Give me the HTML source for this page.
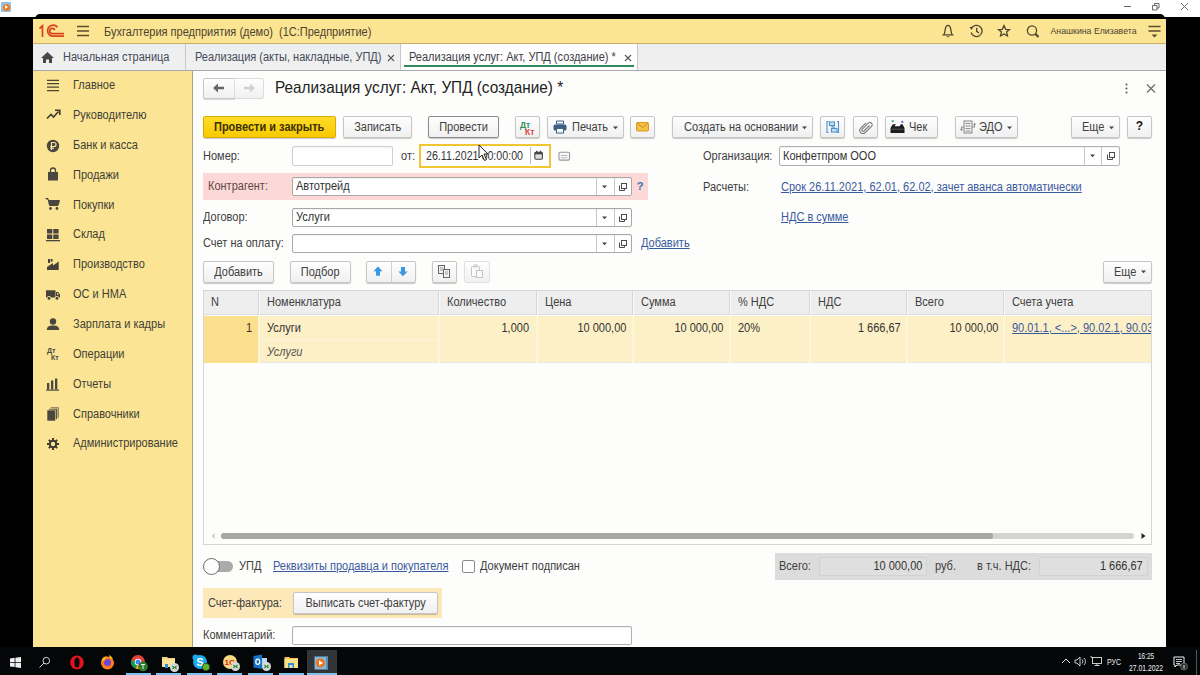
<!DOCTYPE html>
<html><head><meta charset="utf-8">
<style>
*{box-sizing:border-box;margin:0;padding:0}
html,body{width:1200px;height:675px;overflow:hidden;background:#000;font-family:"Liberation Sans",sans-serif;font-size:11px;color:#404040}
div,span,svg{position:absolute}
.t{white-space:nowrap;line-height:1}
.btn{height:21px;background:linear-gradient(#fefefe,#f0f0f0);border:1px solid #c6c6c6;border-radius:2px;box-shadow:0 1px 1px rgba(0,0,0,.2);color:#404040;text-align:center;line-height:19px;white-space:nowrap}
.fld{background:#fff;border:1px solid #c6c6c6;border-radius:2px;box-shadow:inset 0 1px 1px rgba(0,0,0,.05)}
.lnk{color:#3a5a9e;text-decoration:underline;white-space:nowrap;line-height:1}
.si{left:73px;color:#403e34;white-space:nowrap;line-height:1;font-size:12px;transform:scaleX(.917);transform-origin:0 0}
.s{font-size:12px;transform:scaleX(.917);transform-origin:0 0}
.sr{font-size:12px;transform:scaleX(.917);transform-origin:100% 0}
i.bt{position:relative;top:.8px;display:inline-block;font-style:normal;font-size:12px;transform:scaleX(.917)}
i.bl{transform-origin:0 50%}
.ic{left:47px;fill:#4a4a44}
.th{top:290px;height:25px;background:#eeeeee;border-right:1px solid #fff;line-height:25px;padding-left:7px;color:#404040;white-space:nowrap}
.dd{width:1px;background:#d8d8d8}
</style></head><body>
<!-- top white bar -->
<div style="left:0;top:0;width:1200px;height:17px;background:#fff"></div>
<div style="left:1px;top:2px;width:10px;height:10px;background:#8fc3ea;border-radius:1px"></div>
<div style="left:2.5px;top:3.5px;width:7px;height:7px;background:#f47a12;border-radius:50%"></div>
<svg style="left:0;top:0" width="12" height="14"><path d="M5 5 L8 7 L5 9 Z" fill="#fff"/></svg>
<svg style="left:1120px;top:0" width="80" height="14" fill="none" stroke="#666" stroke-width="1">
 <path d="M4 6.5 H11"/>
 <path d="M32.5 5.5 h4.5 v4.5 h-4.5 z M34.5 5.5 v-2 h4.5 v4.5 h-2"/>
 <path d="M61 3 L68 10 M68 3 L61 10"/>
</svg>
<div style="left:35px;top:14px;width:1130px;height:8px;background:#000;border-radius:5px 5px 0 0"></div>
<!-- window -->
<div style="left:33px;top:19px;width:1133px;height:628px;background:#fdfdfc"></div>
<!-- header -->
<div style="left:33px;top:19px;width:1133px;height:25px;background:#fce592;border-bottom:1px solid #c9b06a"></div>
<svg style="left:38px;top:24px" width="28" height="14" fill="none" stroke="#d8431c" stroke-width="1.7">
 <path d="M1.5 4.5 L4.5 1.8 V13"/>
 <path d="M19.5 3.2 A5.6 5.6 0 1 0 14 12.2 H26"/>
 <path d="M16.8 6.2 A2.6 2.6 0 1 0 14 9.6 H26"/>
</svg>
<svg style="left:76px;top:25px" width="14" height="12" stroke="#5b4d2e" stroke-width="1.3"><path d="M1 1.5 H13 M1 6 H13 M1 10.5 H13"/></svg>
<span class="t s" style="left:103.8px;top:25.7px;color:#4a4330">Бухгалтерия предприятия (демо)&nbsp; (1С:Предприятие)</span>
<svg style="left:940px;top:23px" width="110" height="16" fill="none" stroke="#4f4630" stroke-width="1.3">
 <path d="M2.5 11.8 H13.5 M3.8 11.8 C5 10.3 5 6.5 5.5 5 C6 3 7 2.3 8 2.3 C9 2.3 10 3 10.5 5 C11 6.5 11 10.3 12.2 11.8" /><path d="M6.2 13.2 H9.8 L8 14.6 Z" fill="#4f4630" stroke="none"/>
 <path d="M31.6 5.2 A5.6 5.6 0 1 1 31.1 9.5 M36.7 4.8 V8.4 L39 10" /><path d="M29.5 4 L33 3.8 L31.6 7 Z" fill="#4f4630" stroke="none"/>
 <path d="M64 2.5 L65.7 6.3 L69.5 6.6 L66.6 9.1 L67.5 13 L64 10.9 L60.5 13 L61.4 9.1 L58.5 6.6 L62.3 6.3 Z" />
 <circle cx="92" cy="7.5" r="4.6"/><path d="M95.2 10.7 L98.5 14" stroke-width="2.2"/>
</svg>
<span class="t" style="left:1050.5px;top:26.9px;font-size:8.76px;color:#4a4330">Анашкина Елизавета</span>
<svg style="left:1147px;top:24px" width="16" height="16" stroke="#5b4d2e" stroke-width="1.3"><path d="M1.5 2.5 H13.5 M1.5 7 H13.5"/><path d="M4.5 10.5 H10.5 L7.5 13.5 Z" fill="#5b4d2e" stroke="none"/></svg>
<!-- tabs -->
<div style="left:33px;top:44px;width:1133px;height:27px;background:linear-gradient(#edeeef,#f0f0f0);border-bottom:1px solid #a9a9a9"></div>
<div style="left:185px;top:44px;width:1px;height:26px;background:#c8c8c8"></div>
<div style="left:400px;top:44px;width:1px;height:26px;background:#c8c8c8"></div>
<div style="left:401px;top:44px;width:236px;height:26px;background:#fdfdfd"></div>
<div style="left:637px;top:44px;width:1px;height:26px;background:#c8c8c8"></div>
<div style="left:404px;top:65px;width:230px;height:2px;background:#2f8a5a"></div>
<svg style="left:41px;top:51px" width="14" height="13" fill="#484848"><path d="M6.5 1 L13 7 H11 V12 H8 V8.5 H5 V12 H2 V7 H0 Z"/></svg>
<span class="t s" style="left:63.4px;top:50.8px;color:#454a58">Начальная страница</span>
<span class="t s" style="left:194.7px;top:51.2px;color:#454a58">Реализация (акты, накладные, УПД)</span>
<svg style="left:387px;top:54px" width="8" height="8" stroke="#555" stroke-width="1.1"><path d="M1 1 L7 7 M7 1 L1 7"/></svg>
<span class="t s" style="left:409px;top:51.2px;color:#404048">Реализация услуг: Акт, УПД (создание) *</span>
<svg style="left:624px;top:54px" width="8" height="8" stroke="#555" stroke-width="1.1"><path d="M1 1 L7 7 M7 1 L1 7"/></svg>
<!-- sidebar -->
<div style="left:33px;top:71px;width:160px;height:576px;background:#fbe595;border-right:1px solid #a8a27a"></div>
<span class="si" style="top:79.0px">Главное</span>
<span class="si" style="top:108.8px">Руководителю</span>
<span class="si" style="top:138.7px">Банк и касса</span>
<span class="si" style="top:168.6px">Продажи</span>
<span class="si" style="top:198.5px">Покупки</span>
<span class="si" style="top:228.3px">Склад</span>
<span class="si" style="top:258.2px">Производство</span>
<span class="si" style="top:288.1px">ОС и НМА</span>
<span class="si" style="top:317.9px">Зарплата и кадры</span>
<span class="si" style="top:347.8px">Операции</span>
<span class="si" style="top:377.7px">Отчеты</span>
<span class="si" style="top:407.5px">Справочники</span>
<span class="si" style="top:437.4px">Администрирование</span>

<!-- sidebar icons -->
<svg style="left:46px;top:78px" width="14" height="14" stroke="#4a4535" stroke-width="1.3"><path d="M1 2.3 H13 M1 5.7 H13 M1 9.1 H13 M1 12.6 H13"/></svg>
<svg style="left:46px;top:109px" width="15" height="11" fill="none" stroke="#403c30" stroke-width="1.6"><path d="M1 9.5 L5 5.5 L7.5 8 L12.5 2.5"/><path d="M9 1.2 H13.8 V6" /></svg>
<svg style="left:46px;top:139px" width="14" height="14"><circle cx="7" cy="7" r="6.2" fill="#4a4640"/><path d="M5.5 11 V3.5 H8 A2 2 0 0 1 8 7.5 H4.2 M4.2 9.2 H8" fill="none" stroke="#fbe595" stroke-width="1.2"/></svg>
<svg style="left:47px;top:167px" width="12" height="15"><path d="M3.5 5 V3.5 A2.5 2.5 0 0 1 8.5 3.5 V5" fill="none" stroke="#4a4640" stroke-width="1.3"/><path d="M1 5 H11 V13.5 H1 Z" fill="#4a4640"/></svg>
<svg style="left:45px;top:197px" width="16" height="14" fill="#4a4640"><path d="M0.5 1.5 H3 L4.5 8.5 H13 L14.5 3.5 H3.5" fill="#4a4640" stroke="#4a4640" stroke-width="1"/><circle cx="5.5" cy="11.5" r="1.4"/><circle cx="12" cy="11.5" r="1.4"/></svg>
<svg style="left:46px;top:228px" width="14" height="14" fill="#4a4640"><rect x="1" y="1" width="5.3" height="4.5"/><rect x="7.3" y="1" width="5.3" height="4.5"/><rect x="1" y="6.5" width="5.3" height="4.5"/><rect x="7.3" y="6.5" width="5.3" height="4.5"/><rect x="0" y="12" width="14" height="1.3"/></svg>
<svg style="left:46px;top:257px" width="14" height="14" fill="#45423a"><path d="M1 13 V10 L7 6 V8.5 L12.7 4.5 V13 Z"/><rect x="2" y="2" width="2" height="4"/><rect x="4.6" y="2" width="2" height="2.6"/></svg>
<svg style="left:45px;top:288px" width="16" height="13" fill="#45423a"><rect x="1" y="2.3" width="9.5" height="7.2"/><path d="M11 4 H13.3 L15 6.5 V9.5 H11 Z"/><path d="M12 5 H13 L14 6.5 H12 Z" fill="#fbe595"/><circle cx="4" cy="10.3" r="1.9" stroke="#fbe595" stroke-width="0.9"/><circle cx="12" cy="10.3" r="1.9" stroke="#fbe595" stroke-width="0.9"/></svg>
<svg style="left:46px;top:317px" width="14" height="14" fill="#4a4640"><circle cx="7" cy="4.5" r="3.2"/><path d="M0.8 13 C1 9 4 8.5 7 8.5 C10 8.5 13 9 13.2 13 Z"/></svg>
<span class="t" style="left:47px;top:347px;font-size:7px;font-weight:bold;color:#4a4640">Дт</span>
<span class="t" style="left:51px;top:353.5px;font-size:7px;font-weight:bold;color:#4a4640">Кт</span>
<svg style="left:46px;top:377px" width="14" height="14" fill="#4a4640"><rect x="1" y="6" width="2.3" height="6.5"/><rect x="5" y="3.5" width="2.3" height="9"/><rect x="9" y="1.5" width="2.3" height="11"/><rect x="0" y="12.5" width="13" height="1.2"/></svg>
<svg style="left:46px;top:406px" width="14" height="16"><rect x="4.5" y="1" width="8.5" height="11" fill="#6a6658" stroke="#fbe595" stroke-width="0.6"/><rect x="2.8" y="2.5" width="8.5" height="11" fill="#5a5648" stroke="#fbe595" stroke-width="0.6"/><rect x="1" y="4" width="8.5" height="11" fill="#4a4640" stroke="#fbe595" stroke-width="0.6"/></svg>
<svg style="left:46px;top:437px" width="14" height="14"><g stroke="#3f3b30" stroke-width="1.9"><path d="M7 1 V3.5 M7 10.5 V13 M1 7 H3.5 M10.5 7 H13 M2.8 2.8 L4.5 4.5 M9.5 9.5 L11.2 11.2 M11.2 2.8 L9.5 4.5 M4.5 9.5 L2.8 11.2"/></g><circle cx="7" cy="7" r="3.2" fill="none" stroke="#3f3b30" stroke-width="2"/></svg>

<!-- ===== FORM ===== -->
<div class="btn" style="left:203px;top:78px;width:32px;height:21px;border-radius:2px 0 0 2px;box-shadow:0 1px 1px rgba(0,0,0,.15)"></div>
<div class="btn" style="left:234px;top:78px;width:30px;height:21px;border-radius:0 2px 2px 0;border-color:#dcdcdc;box-shadow:none"></div>
<svg style="left:212px;top:82px" width="14" height="12" fill="#666"><path d="M1 6 L6 1.5 V4.8 H12 V7.2 H6 V10.5 Z"/></svg>
<svg style="left:242px;top:82px" width="14" height="12" fill="#d0d0d0"><path d="M13 6 L8 1.5 V4.8 H2 V7.2 H8 V10.5 Z"/></svg>
<span class="t" style="left:274.7px;top:78.7px;font-size:16.5px;color:#222;transform:scaleX(.929);transform-origin:0 0">Реализация услуг: Акт, УПД (создание) *</span>
<svg style="left:1122px;top:82px" width="40" height="14" fill="#555"><circle cx="4.5" cy="2.5" r="1"/><circle cx="4.5" cy="6.5" r="1"/><circle cx="4.5" cy="10.5" r="1"/><path d="M25 2.5 L33 10.5 M33 2.5 L25 10.5" stroke="#666" stroke-width="1.1"/></svg>

<!-- toolbar -->
<div class="btn" style="left:203px;top:116px;width:133px;height:22px;background:linear-gradient(#ffdc2a,#f7ca00);border-color:#d9ad00;font-weight:bold;color:#3a3000;line-height:19px"><i class="bt">Провести и закрыть</i></div>
<div class="btn" style="left:343px;top:116px;width:69px;height:22px"><i class="bt">Записать</i></div>
<div class="btn" style="left:428px;top:116px;width:71px;height:22px;border-color:#8a8a8a"><i class="bt">Провести</i></div>
<div class="btn" style="left:515px;top:116px;width:25px;height:22px"></div>
<span class="t" style="left:520px;top:121px;font-size:8.5px;font-weight:bold;color:#2f8f60">Дт</span>
<span class="t" style="left:525px;top:127.5px;font-size:8.5px;font-weight:bold;color:#d9473f">Кт</span>
<div class="btn" style="left:547px;top:116px;width:77px;height:22px;text-align:left;padding-left:24px"><i class="bt bl">Печать</i></div>
<svg style="left:553px;top:120px" width="14" height="14"><path d="M3.5 1 H10.5 V4 H3.5 Z" fill="#fff" stroke="#3d5f86"/><rect x="0.5" y="4.5" width="13" height="6" rx="1.5" fill="#3d5f86"/><rect x="3.5" y="8.5" width="7" height="4.5" fill="#fff" stroke="#3d5f86"/></svg>
<svg style="left:612px;top:126px" width="7" height="4" fill="#444"><path d="M1 0.6 H6 L3.5 3.3 Z"/></svg>
<div class="btn" style="left:630px;top:116px;width:25px;height:22px"></div>
<svg style="left:636px;top:122px" width="13" height="10"><rect x="0.5" y="0.5" width="12" height="8.5" rx="1" fill="#f4c04a" stroke="#d99a1e"/><path d="M1 1 L6.5 5.5 L12 1" fill="none" stroke="#c98a10"/></svg>
<div class="btn" style="left:672px;top:116px;width:141px;height:22px;text-align:left;padding-left:10.5px"><i class="bt bl">Создать на основании</i></div>
<svg style="left:801px;top:126px" width="7" height="4" fill="#444"><path d="M1 0.6 H6 L3.5 3.3 Z"/></svg>
<div class="btn" style="left:820px;top:116px;width:25px;height:22px"></div>
<svg style="left:826px;top:120px" width="14" height="14" fill="none" stroke="#4a90cf" stroke-width="1.1"><path d="M2.5 1.5 H1 V12.5 H2.5 M11 1.5 H12.5 V12.5 H11"/><rect x="3.5" y="2" width="5" height="3.5" fill="#cfe3f5"/><rect x="5.5" y="8.5" width="5.5" height="3.5" fill="#cfe3f5"/><path d="M6 5.5 V7 H8 V8.5"/></svg>
<div class="btn" style="left:853px;top:116px;width:25px;height:22px"></div>
<svg style="left:859px;top:121px" width="14" height="13" fill="none" stroke="#7a7a7a" stroke-width="1.1"><path d="M10.5 4.5 L5 10 A1.3 1.3 0 0 1 3.2 8.2 L9.5 1.9 A2.3 2.3 0 0 1 12.7 5.1 L6 11.8 A3.2 3.2 0 0 1 1.5 7.3 L7 1.8"/></svg>
<div class="btn" style="left:885px;top:116px;width:53px;height:22px;text-align:left;padding-left:22.5px"><i class="bt bl">Чек</i></div>
<svg style="left:889px;top:119px" width="17" height="16"><path d="M2 1.5 H5.5 L3.75 3.6 Z" fill="#22a06a"/><path d="M11.5 3.6 H15 L13.25 1.5 Z" fill="#4a4fc0"/><path d="M1.5 9 L3.8 5.2 H13.5 L15.5 9 V14 H1.5 Z" fill="#1c1c1c"/><path d="M5.5 7.2 L7.5 4.6 H12.3 L10.6 7.2 Z" fill="#fff"/><path d="M2.5 10.2 H14.5" stroke="#666" stroke-width="0.8"/></svg>
<div class="btn" style="left:955px;top:116px;width:63px;height:22px;text-align:left;padding-left:23px"><i class="bt bl">ЭДО</i></div>
<svg style="left:960px;top:120px" width="16" height="14" fill="none" stroke="#909090" stroke-width="1.1"><rect x="4" y="1" width="8" height="12" fill="#f2f2f2"/><path d="M5.5 3.5 H10.5 M5.5 6 H10.5 M5.5 8.5 H10.5 M5.5 11 H10.5"/><path d="M1.5 10 V7 H4 M14.5 4 V7 H12"/><path d="M0 9 L1.5 11.5 L3 9 Z M13 5 L14.5 2.5 L16 5 Z" fill="#909090" stroke="none"/></svg>
<svg style="left:1006px;top:126px" width="7" height="4" fill="#444"><path d="M1 0.6 H6 L3.5 3.3 Z"/></svg>
<div class="btn" style="left:1071px;top:116px;width:49px;height:22px;text-align:left;padding-left:10px"><i class="bt bl">Еще</i></div>
<svg style="left:1108px;top:126px" width="7" height="4" fill="#444"><path d="M1 0.6 H6 L3.5 3.3 Z"/></svg>
<div class="btn" style="left:1127px;top:116px;width:25px;height:22px;font-weight:bold;font-size:12px;color:#111">?</div>

<!-- row 1 -->
<span class="t s" style="left:203.3px;top:149.8px">Номер:</span>
<div class="fld" style="left:292px;top:146px;width:101px;height:20px;border-color:#d0d0d0"></div>
<span class="t s" style="left:400.8px;top:150.0px">от:</span>
<div style="left:419px;top:144px;width:132px;height:24px;border:2px solid #f2c534;background:#fff"></div>
<span class="t" style="left:426.3px;top:149.5px;font-size:12px;color:#333;transform:scaleX(.888);transform-origin:0 0">26.11.2021 00:00:00</span>
<div style="left:530px;top:147px;width:1px;height:17px;background:#bbb"></div>
<svg style="left:534px;top:150px" width="10" height="11"><rect x="0.8" y="2.3" width="7.6" height="7" rx="1.2" fill="#ddd" stroke="#444" stroke-width="1.1"/><rect x="0.8" y="2.3" width="7.6" height="2" fill="#444"/><rect x="2" y="0.8" width="1.4" height="2" fill="#444"/><rect x="5.8" y="0.8" width="1.4" height="2" fill="#444"/></svg>
<svg style="left:558px;top:151px" width="13" height="11"><rect x="1" y="1.3" width="10.5" height="7.8" rx="1" fill="#fafafa" stroke="#999" stroke-width="1.1"/><path d="M3 4.5 H9.5 M3 6.8 H9.5" stroke="#b8b8b8" stroke-width="1"/></svg>
<!-- cursor -->
<svg style="left:478px;top:144px" width="14" height="20"><path d="M1 1 L1 14 L4 11 L6.5 16.5 L8.5 15.5 L6 10 L10 10 Z" fill="#fff" stroke="#222" stroke-width="1"/></svg>

<span class="t s" style="left:702.9px;top:149.8px">Организация:</span>
<div class="fld" style="left:779px;top:146px;width:341px;height:20px;border-color:#b0b0b0"></div>
<span class="t s" style="left:783px;top:150.0px;color:#333">Конфетпром ООО</span>
<div class="dd" style="left:1084px;top:147px;height:18px;background:#c8c8c8"></div>
<svg style="left:1089px;top:154px" width="7" height="4" fill="#444"><path d="M1 0.6 H6 L3.5 3.3 Z"/></svg>
<div class="dd" style="left:1101px;top:147px;height:18px;background:#c8c8c8"></div>
<svg style="left:1106px;top:151px" width="10" height="10" fill="none" stroke="#4a4a4a" stroke-width="1"><rect x="3.5" y="1.5" width="5" height="5"/><path d="M1.5 3.5 V8.5 H6.5 V6.5"/></svg>

<!-- row 2 -->
<div style="left:203px;top:173px;width:445px;height:27px;background:#fcd8d6"></div>
<span class="t s" style="left:207.5px;top:180.2px;color:#5e4848">Контрагент:</span>
<div class="fld" style="left:292px;top:177px;width:340px;height:19px;border-color:#a8a8a8"></div>
<span class="t s" style="left:296.3px;top:180.2px;color:#333">Автотрейд</span>
<div class="dd" style="left:596px;top:178px;height:17px;background:#c8c8c8"></div>
<svg style="left:601px;top:184.5px" width="7" height="4" fill="#444"><path d="M1 0.6 H6 L3.5 3.3 Z"/></svg>
<div class="dd" style="left:614px;top:178px;height:17px;background:#c8c8c8"></div>
<svg style="left:618px;top:182px" width="10" height="10" fill="none" stroke="#4a4a4a" stroke-width="1"><rect x="3.5" y="1.5" width="5" height="5"/><path d="M1.5 3.5 V8.5 H6.5 V6.5"/></svg>
<span class="t" style="left:636.5px;top:180.5px;font-weight:bold;font-size:11.5px;color:#3a73b5">?</span>

<span class="t s" style="left:702.9px;top:180.5px">Расчеты:</span>
<span class="lnk s" style="left:780.5px;top:180.5px">Срок 26.11.2021, 62.01, 62.02, зачет аванса автоматически</span>

<!-- row 3 -->
<span class="t s" style="left:203.3px;top:210.9px">Договор:</span>
<div class="fld" style="left:292px;top:208px;width:340px;height:19px;border-color:#a8a8a8"></div>
<span class="t s" style="left:296.1px;top:210.9px;color:#333">Услуги</span>
<div class="dd" style="left:596px;top:209px;height:17px;background:#c8c8c8"></div>
<svg style="left:601px;top:215.5px" width="7" height="4" fill="#444"><path d="M1 0.6 H6 L3.5 3.3 Z"/></svg>
<div class="dd" style="left:614px;top:209px;height:17px;background:#c8c8c8"></div>
<svg style="left:618px;top:213px" width="10" height="10" fill="none" stroke="#4a4a4a" stroke-width="1"><rect x="3.5" y="1.5" width="5" height="5"/><path d="M1.5 3.5 V8.5 H6.5 V6.5"/></svg>
<span class="lnk s" style="left:780.5px;top:211.0px">НДС в сумме</span>

<!-- row 4 -->
<span class="t s" style="left:203.3px;top:237.1px">Счет на оплату:</span>
<div class="fld" style="left:292px;top:234px;width:340px;height:19px;border-color:#a8a8a8"></div>
<div class="dd" style="left:596px;top:235px;height:17px;background:#c8c8c8"></div>
<svg style="left:601px;top:241.5px" width="7" height="4" fill="#444"><path d="M1 0.6 H6 L3.5 3.3 Z"/></svg>
<div class="dd" style="left:614px;top:235px;height:17px;background:#c8c8c8"></div>
<svg style="left:618px;top:239px" width="10" height="10" fill="none" stroke="#4a4a4a" stroke-width="1"><rect x="3.5" y="1.5" width="5" height="5"/><path d="M1.5 3.5 V8.5 H6.5 V6.5"/></svg>
<span class="lnk s" style="left:641px;top:237.1px">Добавить</span>

<!-- table toolbar -->
<div class="btn" style="left:203px;top:261px;width:71px;height:22px;line-height:18px"><i class="bt">Добавить</i></div>
<div class="btn" style="left:290px;top:261px;width:61px;height:22px;line-height:18px"><i class="bt">Подбор</i></div>
<div class="btn" style="left:366px;top:261px;width:50px;height:22px"></div>
<div style="left:391px;top:262px;width:1px;height:20px;background:#cfcfcf"></div>
<svg style="left:373px;top:266px" width="11" height="11" fill="#3a98e4"><path d="M5 0.6 L9.6 5.2 H7 V9.8 H3 V5.2 H0.4 Z"/></svg>
<svg style="left:397.5px;top:266px" width="11" height="11" fill="#3a98e4"><path d="M5 10.2 L9.6 5.6 H7 V1 H3 V5.6 H0.4 Z"/></svg>
<div class="btn" style="left:432px;top:261px;width:25px;height:22px"></div>
<svg style="left:437px;top:264px" width="15" height="15" fill="#f4f4f4" stroke="#666" stroke-width="1"><rect x="1.5" y="1.5" width="6" height="8"/><path d="M3 4 H6 M3 6 H6" stroke="#999"/><rect x="6.5" y="5.5" width="6" height="8"/><path d="M8 8 H11 M8 10 H11" stroke="#999"/></svg>
<div class="btn" style="left:464px;top:261px;width:26px;height:22px;border-color:#e0e0e0;box-shadow:none"></div>
<svg style="left:470px;top:264px" width="15" height="15" fill="#fbfbfb" stroke="#c4c4c4" stroke-width="1"><rect x="1.5" y="2.5" width="8" height="10" rx="1"/><rect x="4" y="1" width="3" height="2"/><rect x="6.5" y="6.5" width="6" height="7"/></svg>
<div class="btn" style="left:1103px;top:261px;width:49px;height:22px;text-align:left;padding-left:10px;line-height:18px"><i class="bt bl">Еще</i></div>
<svg style="left:1140px;top:270px" width="7" height="4" fill="#444"><path d="M1 0.6 H6 L3.5 3.3 Z"/></svg>

<!-- table -->
<div style="left:203px;top:290px;width:949px;height:255px;border:1px solid #d6d6d6;background:#fdfdfc"></div>
<div style="left:204px;top:291px;width:947px;height:24px;background:#eeeeee;border-bottom:1px solid #dcdcdc"></div>
<div style="left:204px;top:316px;width:947px;height:47px;background:#fdf0c6;border-bottom:1px solid #e6e8e6"></div>
<div style="left:204px;top:316px;width:55px;height:47px;background:#fcdf8c"></div>
<div style="left:258px;top:291px;width:1px;height:24px;background:#d6d6d6"></div><div style="left:259px;top:291px;width:1px;height:24px;background:#fafafa"></div>
<div style="left:258px;top:316px;width:2px;height:47px;background:#fdf5dc"></div>
<div style="left:438px;top:291px;width:1px;height:24px;background:#d6d6d6"></div><div style="left:439px;top:291px;width:1px;height:24px;background:#fafafa"></div>
<div style="left:438px;top:316px;width:2px;height:47px;background:#fdf5dc"></div>
<div style="left:536px;top:291px;width:1px;height:24px;background:#d6d6d6"></div><div style="left:537px;top:291px;width:1px;height:24px;background:#fafafa"></div>
<div style="left:536px;top:316px;width:2px;height:47px;background:#fdf5dc"></div>
<div style="left:632px;top:291px;width:1px;height:24px;background:#d6d6d6"></div><div style="left:633px;top:291px;width:1px;height:24px;background:#fafafa"></div>
<div style="left:632px;top:316px;width:2px;height:47px;background:#fdf5dc"></div>
<div style="left:729px;top:291px;width:1px;height:24px;background:#d6d6d6"></div><div style="left:730px;top:291px;width:1px;height:24px;background:#fafafa"></div>
<div style="left:729px;top:316px;width:2px;height:47px;background:#fdf5dc"></div>
<div style="left:809px;top:291px;width:1px;height:24px;background:#d6d6d6"></div><div style="left:810px;top:291px;width:1px;height:24px;background:#fafafa"></div>
<div style="left:809px;top:316px;width:2px;height:47px;background:#fdf5dc"></div>
<div style="left:906px;top:291px;width:1px;height:24px;background:#d6d6d6"></div><div style="left:907px;top:291px;width:1px;height:24px;background:#fafafa"></div>
<div style="left:906px;top:316px;width:2px;height:47px;background:#fdf5dc"></div>
<div style="left:1003px;top:291px;width:1px;height:24px;background:#d6d6d6"></div><div style="left:1004px;top:291px;width:1px;height:24px;background:#fafafa"></div>
<div style="left:1003px;top:316px;width:2px;height:47px;background:#fdf5dc"></div>
<div style="left:260px;top:339px;width:179px;height:1px;background:#fdf6dc"></div>
<span class="t s" style="left:210.5px;top:296.3px">N</span>
<span class="t s" style="left:266.5px;top:296.3px">Номенклатура</span>
<span class="t s" style="left:446.5px;top:296.3px">Количество</span>
<span class="t s" style="left:544.5px;top:296.3px">Цена</span>
<span class="t s" style="left:640.5px;top:296.3px">Сумма</span>
<span class="t s" style="left:737.5px;top:296.3px">% НДС</span>
<span class="t s" style="left:817.5px;top:296.3px">НДС</span>
<span class="t s" style="left:914.5px;top:296.3px">Всего</span>
<span class="t s" style="left:1011.5px;top:296.3px">Счета учета</span>
<span class="t s" style="left:246px;top:322.0px;color:#333">1</span>
<span class="t s" style="left:266.9px;top:322.0px;color:#333">Услуги</span>
<span class="t s" style="left:266.9px;top:346.2px;font-style:italic;color:#555">Услуги</span>
<span class="t sr" style="right:670.5px;top:322.0px;color:#333">1,000</span>
<span class="t sr" style="right:573.7px;top:322.0px;color:#333">10 000,00</span>
<span class="t sr" style="right:476.70000000000005px;top:322.0px;color:#333">10 000,00</span>
<span class="t sr" style="right:299.29999999999995px;top:322.0px;color:#333">1 666,67</span>
<span class="t sr" style="right:201.70000000000005px;top:322.0px;color:#333">10 000,00</span>
<span class="t s" style="left:737.8px;top:322.0px;color:#333">20%</span>
<div style="left:1011.5px;top:316px;width:139px;height:24px;overflow:hidden"><span class="lnk s" style="left:0;top:6.0px">90.01.1, &lt;...&gt;, 90.02.1, 90.03</span></div>
<svg style="left:210px;top:532px" width="8" height="8" fill="#d0d0d0"><path d="M1.5 4 L5 1 V7 Z"/></svg>
<div style="left:221px;top:533px;width:913px;height:6px;background:#d4d4d0;border-radius:3px"></div>
<div style="left:221px;top:533px;width:772px;height:6px;background:#a6a6a2;border-radius:3px"></div>
<svg style="left:1139px;top:532px" width="8" height="8" fill="#222"><path d="M6.5 4 L2.5 1 V7 Z"/></svg>
<!-- bottom -->
<div style="left:210px;top:561px;width:23px;height:11px;background:#ababab;border-radius:6px"></div>
<div style="left:203px;top:558px;width:17px;height:17px;background:#fdfdfd;border:1.3px solid #6a6a6a;border-radius:50%"></div>
<span class="t s" style="left:238.5px;top:560.2px">УПД</span>
<span class="lnk s" style="left:273.2px;top:560.2px">Реквизиты продавца и покупателя</span>
<div style="left:462px;top:560px;width:13px;height:13px;border:1px solid #8a8a8a;border-radius:2px;background:#fff"></div>
<span class="t s" style="left:480.4px;top:560.2px">Документ подписан</span>
<div style="left:775px;top:553px;width:377px;height:27px;background:#dcdcdc"></div>
<span class="t s" style="left:778.8px;top:560.4px">Всего:</span>
<div style="left:819px;top:557px;width:108px;height:19px;background:#dfdfdf;border:1px solid #d2d2d2;border-radius:2px"></div>
<span class="t sr" style="right:277.2px;top:560.4px;color:#333">10 000,00</span>
<span class="t s" style="left:935.2px;top:560.4px">руб.</span>
<span class="t s" style="left:977.2px;top:560.4px">в т.ч. НДС:</span>
<div style="left:1039px;top:557px;width:109px;height:19px;background:#dfdfdf;border:1px solid #d2d2d2;border-radius:2px"></div>
<span class="t sr" style="right:57.2px;top:560.4px;color:#333">1 666,67</span>
<div style="left:203px;top:588px;width:239px;height:30px;background:#fce8b8"></div>
<span class="t s" style="left:208px;top:596.9px">Счет-фактура:</span>
<div class="btn" style="left:293px;top:592px;width:145px;height:22px"><i class="bt">Выписать счет-фактуру</i></div>
<span class="t s" style="left:203.2px;top:629.2px">Комментарий:</span>
<div class="fld" style="left:292px;top:626px;width:340px;height:19px;border-color:#b0b0b0"></div>

<!-- taskbar -->
<div style="left:0;top:647px;width:1200px;height:28px;background:#050608"></div>
<svg style="left:10px;top:657px" width="11" height="11" fill="#f0f0f0"><path d="M0 1.5 L4.6 0.8 V5 H0 Z M5.4 0.7 L11 0 V5 H5.4 Z M0 5.8 H4.6 V10 L0 9.4 Z M5.4 5.8 H11 V11 L5.4 10.2 Z"/></svg>
<svg style="left:38px;top:656px" width="13" height="13" fill="none" stroke="#d8d8d8" stroke-width="1"><circle cx="8.3" cy="4.7" r="3.3"/><path d="M6 7 L1.5 11.5"/></svg>
<svg style="left:69px;top:655px" width="16" height="15"><ellipse cx="8" cy="7.5" rx="6.8" ry="7" fill="#e0141e"/><ellipse cx="8" cy="7.5" rx="2.6" ry="5" fill="#0a0a0a"/></svg>
<svg style="left:99px;top:654px" width="17" height="16"><circle cx="8.5" cy="9" r="6.5" fill="#ff7a1a"/><circle cx="8.5" cy="8.5" r="3.5" fill="#6e45d8"/><path d="M2.5 7 C3 3 6 1.5 9 3 C7 3 6 5 6.5 6 Z" fill="#ffb21a"/><path d="M10 1 C12 2 13 3 14 5 L11 4 Z" fill="#ffd21a"/></svg>
<svg style="left:130px;top:654px" width="20" height="18"><circle cx="8" cy="8" r="7" fill="#db4437"/><path d="M8 8 L1.2 6 A7 7 0 0 0 6 14.7 Z" fill="#0f9d58"/><path d="M8 8 L15 8 A7 7 0 0 1 6 14.7 Z" fill="#f4b400"/><circle cx="8" cy="8" r="3.3" fill="#fff"/><circle cx="8" cy="8" r="2.5" fill="#4285f4"/><circle cx="13" cy="12.5" r="4.8" fill="#2d7a2a"/><path d="M11 10.5 H15 M13 10.5 V15" stroke="#eaeaea" stroke-width="1"/></svg>
<svg style="left:161px;top:655px" width="19" height="18"><path d="M1 2 H6 L7 3 H14 V12 H1 Z" fill="#f3d27a"/><rect x="1" y="4" width="13" height="8" fill="#fbe29a"/><rect x="4" y="9" width="3" height="4" fill="#2a8ee0"/><circle cx="13.5" cy="12.5" r="4.5" fill="#d8d8d8"/><path d="M11.5 11 L13 12.5 L11.5 14 M15.5 11 L14 12.5 L15.5 14" stroke="#1f8a2a" stroke-width="1.1" fill="none"/></svg>
<svg style="left:192px;top:654px" width="19" height="18"><circle cx="8" cy="8" r="7" fill="#18a9f0"/><circle cx="3.5" cy="3.5" r="3" fill="#18a9f0"/><text x="4.3" y="12" font-family="Liberation Sans" font-weight="bold" font-size="11" fill="#fff">S</text><circle cx="14" cy="13" r="3.8" fill="#5cb82a" stroke="#1a1a1a" stroke-width="0.6"/></svg>
<svg style="left:222px;top:654px" width="19" height="18"><circle cx="8" cy="8" r="7" fill="#f8d880"/><text x="2.5" y="11" font-family="Liberation Sans" font-weight="bold" font-size="8" fill="#e02020">1C</text><circle cx="13.5" cy="12.5" r="4.5" fill="#d8d8d8"/><path d="M11.5 11 L13 12.5 L11.5 14 M15.5 11 L14 12.5 L15.5 14" stroke="#1f8a2a" stroke-width="1.1" fill="none"/></svg>
<svg style="left:253px;top:654px" width="19" height="18"><rect x="6" y="4" width="8" height="7" fill="#bcd6f0"/><path d="M0.5 2 L9 0.5 V15 L0.5 13.5 Z" fill="#1572c8"/><ellipse cx="4.8" cy="7.7" rx="2" ry="2.6" fill="none" stroke="#fff" stroke-width="1.2"/><circle cx="13.5" cy="12.5" r="4.5" fill="#d8d8d8"/><path d="M11.5 11 L13 12.5 L11.5 14 M15.5 11 L14 12.5 L15.5 14" stroke="#1f8a2a" stroke-width="1.1" fill="none"/></svg>
<svg style="left:284px;top:656px" width="16" height="14"><path d="M0.5 1 H5 L6 2 H14 V12 H0.5 Z" fill="#f2c858"/><rect x="0.5" y="3" width="13.5" height="9" fill="#fbe08a"/><path d="M4 7 H10 V12 H8.5 V9 H5.5 V12 H4 Z" fill="#2a8ee0"/></svg>
<div style="left:307px;top:650px;width:30px;height:25px;background:#333436"></div>
<svg style="left:314px;top:656px" width="15" height="14"><rect x="0.5" y="0.5" width="13" height="13" fill="#7fb8e0"/><rect x="12" y="0.5" width="2" height="13" fill="#5a8cb8"/><circle cx="6.5" cy="7" r="4.6" fill="#f2741a"/><path d="M5 4.5 L9 7 L5 9.5 Z" fill="#fff"/></svg>
<div style="left:126px;top:673px;width:25px;height:2px;background:#7cc4f0"></div>
<div style="left:156px;top:673px;width:25px;height:2px;background:#7cc4f0"></div>
<div style="left:187px;top:673px;width:25px;height:2px;background:#7cc4f0"></div>
<div style="left:217px;top:673px;width:25px;height:2px;background:#7cc4f0"></div>
<div style="left:248px;top:673px;width:25px;height:2px;background:#7cc4f0"></div>
<div style="left:279px;top:673px;width:25px;height:2px;background:#7cc4f0"></div>
<div style="left:307px;top:673px;width:30px;height:2px;background:#7cc4f0"></div>
<!-- tray -->
<svg style="left:1061px;top:657px" width="10" height="8" fill="none" stroke="#e8e8e8" stroke-width="1"><path d="M1 6 L5 2 L9 6"/></svg>
<svg style="left:1074px;top:656px" width="14" height="11" fill="none" stroke="#e0e0e0" stroke-width="0.9"><path d="M1 4 H3 L6 1 V10 L3 7 H1 Z"/><path d="M8 3.5 A3 3 0 0 1 8 7.5 M10 2 A5 5 0 0 1 10 9"/></svg>
<svg style="left:1090px;top:655px" width="13" height="12" fill="none" stroke="#e0e0e0" stroke-width="0.9"><rect x="2.5" y="2.5" width="9" height="6"/><path d="M7 8.5 V10.5 M4.5 10.5 H9.5 M1 1 L1.5 3"/></svg>
<span class="t" style="left:1107px;top:657.8px;font-size:8.5px;color:#eee;transform:scaleX(0.82);transform-origin:0 0">РУС</span>
<span class="t" style="left:1138px;top:652.3px;font-size:8.5px;color:#eee;transform:scaleX(0.76);transform-origin:0 0">16:25</span>
<span class="t" style="left:1129px;top:663.5px;font-size:8.5px;color:#eee;transform:scaleX(0.8);transform-origin:0 0">27.01.2022</span>
<svg style="left:1173px;top:656px" width="17" height="15"><path d="M1 1 H11 V9 H4 L2 11 V9 H1 Z" fill="none" stroke="#f0f0f0" stroke-width="1"/><path d="M3 3.5 H9 M3 5.5 H9 M3 7.5 H7" stroke="#f0f0f0" stroke-width="0.8"/><circle cx="11" cy="10.5" r="3.5" fill="#303030" stroke="#888" stroke-width="0.6"/><path d="M11 9 V12.5" stroke="#fff" stroke-width="0.9"/></svg>
<div style="left:1196px;top:650px;width:1px;height:25px;background:#555"></div>

</body></html>
